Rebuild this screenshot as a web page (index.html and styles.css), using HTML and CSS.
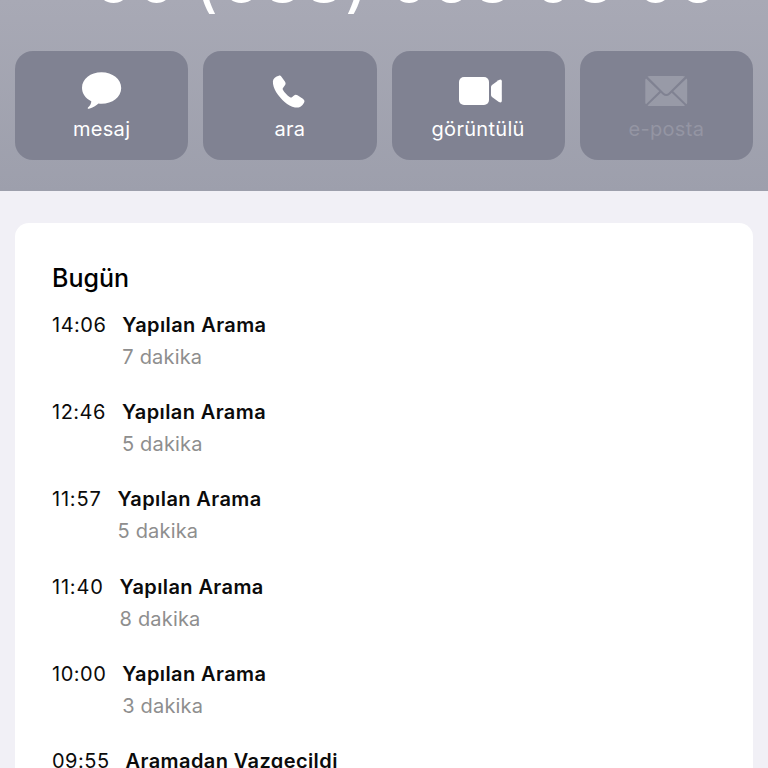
FILE: index.html
```
<!DOCTYPE html>
<html lang="tr">
<head>
<meta charset="utf-8">
<title>Kişi</title>
<link rel="stylesheet" href="styles.css">
</head>
<body>
<header class="header">
  <div class="phone">+90 <span class="paren">(</span>538<span class="paren">)</span> 063 03 06</div>
  <nav class="actions">
    <a class="action">
      <svg class="icon" viewBox="0 0 44 40"><path d="M21.500 1.200C10.500 1.200 2 8 2 16.700C2 22.500 5.400 27.200 11.300 30.200C11.300 32.700 9.800 34.700 8 36.500C7.300 37.400 8 37.900 9 37.700C13 37 16.200 34.500 18.500 32.600C19.500 32.800 20.500 32.800 21.500 32.800C32.500 32.800 41.200 26 41.200 17C41.200 8 32.500 1.200 21.500 1.200Z"/></svg>
      <span>mesaj</span>
    </a>
    <a class="action">
      <svg class="icon" viewBox="1.800 1.200 44 40"><path d="M28.800 37.600C31.800 38.200 34.600 37.300 36.300 35.200C37.600 33.600 38.700 31.900 38.100 30.700C37.700 29.700 36.700 29.100 35.500 28.300L31.300 25.500C29.800 24.600 28.900 24.800 27.500 26L25.400 27.600C24.900 27.900 24.400 27.800 23.800 27.400C20.900 25.500 18.300 22.600 16.800 20.100C16.300 19.300 16.300 18.800 16.800 18.200L18.900 15.300C19.700 14.100 19.500 13.100 18.700 11.800L15.600 7.400C14.800 6.200 13.900 5.600 12.600 5.900C9.500 6.500 7 8.500 6.700 11.500C6.400 18.600 12 26.600 18.400 32.200C21.700 35 25 36.900 28.800 37.600Z"/></svg>
      <span>ara</span>
    </a>
    <a class="action">
      <svg class="icon" viewBox="0 0 44 40"><rect x="3" y="6" width="30" height="28" rx="5"/><path d="M35 16Q35 14.900 36 14.100L42.500 9.200Q45.800 7.500 45.800 10.200V29.800Q45.800 32.500 42.500 30.800L36 25.900Q35 25.100 35 24Z"/></svg>
      <span>görüntülü</span>
    </a>
    <a class="action disabled">
      <svg class="icon" viewBox="0 0 44 40"><path d="M3.500 5.500Q4.500 4.900 6 4.900H38.500Q40 4.900 41 5.500L24.500 22Q22.300 24 20 22ZM1.300 9Q1.300 8 2 7.400L15.300 20.200L2 33.200Q1.300 32.500 1.300 31.500ZM43.200 9Q43.200 8 42.500 7.400L29.200 20.200L42.500 33.200Q43.200 32.500 43.200 31.500ZM16.800 21.700L18.600 23.400Q22.300 26.600 25.900 23.400L27.700 21.700L41 34.500Q40 35.100 38.500 35.100H6Q4.500 35.100 3.500 34.500Z"/></svg>
      <span>e-posta</span>
    </a>
  </nav>
</header>
<main class="card">
  <h1>Bugün</h1>
  <section class="call"><time>14:06</time><div><h2>Yapılan Arama</h2><p>7 dakika</p></div></section>
  <section class="call"><time>12:46</time><div><h2>Yapılan Arama</h2><p>5 dakika</p></div></section>
  <section class="call"><time class="narrow">11:57</time><div><h2>Yapılan Arama</h2><p>5 dakika</p></div></section>
  <section class="call"><time class="narrow">11:40</time><div><h2>Yapılan Arama</h2><p>8 dakika</p></div></section>
  <section class="call"><time>10:00</time><div><h2>Yapılan Arama</h2><p>3 dakika</p></div></section>
  <section class="call"><time>09:55</time><div><h2>Aramadan Vazgeçildi</h2></div></section>
</main>
</body>
</html>
```
FILE: styles.css
```
* { box-sizing: border-box; margin: 0; padding: 0; }
body {
  height: 768px;
  overflow: hidden;
  background: #f1f0f6;
  color: #0b0b0b;
  font-family: Inter, "Liberation Sans", sans-serif;
}
.header {
  height: 191px;
  overflow: hidden;
  background: linear-gradient(#a8a9b5, #9d9fac);
}
.phone {
  height: 51px;
  line-height: 80px;
  font-size: 67px;
  white-space: nowrap;
  text-align: center;
  color: #fff;
  transform: translate(0, -62px);
}
.paren { display: inline-block; transform: translateY(3px); }
.paren:first-child { transform: translate(-3px, 3px); }
.actions {
  display: grid;
  grid-template-columns: repeat(4, 1fr);
  gap: 15px;
  padding: 0 15px;
}
.action {
  display: flex;
  flex-direction: column;
  align-items: center;
  height: 109px;
  padding-top: 20px;
  border-radius: 18px;
  background: #808292;
  color: #fff;
  font-size: 20px;
  letter-spacing: .3px;
}
.action span { line-height: 26px; margin-top: 5px; }
.icon { width: 44px; height: 40px; fill: currentColor; overflow: visible; }
.disabled { color: #989aa7; }
.disabled span { color: #9495a3; }
.card {
  height: 545px;
  overflow: hidden;
  margin: 32px 15px 0;
  padding: 37px 37px 0;
  border-radius: 14px 14px 0 0;
  background: #fff;
}
h1 { font-size: 25px; line-height: 36px; font-weight: 500; color: #000; margin-bottom: 13px; }
.call { display: flex; gap: 16px; height: 87.2px; }
time { font-size: 20px; line-height: 32px; letter-spacing: .5px; }
.narrow { letter-spacing: .8px; }
h2 { font-size: 20px; line-height: 32px; font-weight: 600; letter-spacing: .4px; }
p { font-size: 20px; line-height: 33.500px; letter-spacing: .18px; color: #8e8e8e; }
```
